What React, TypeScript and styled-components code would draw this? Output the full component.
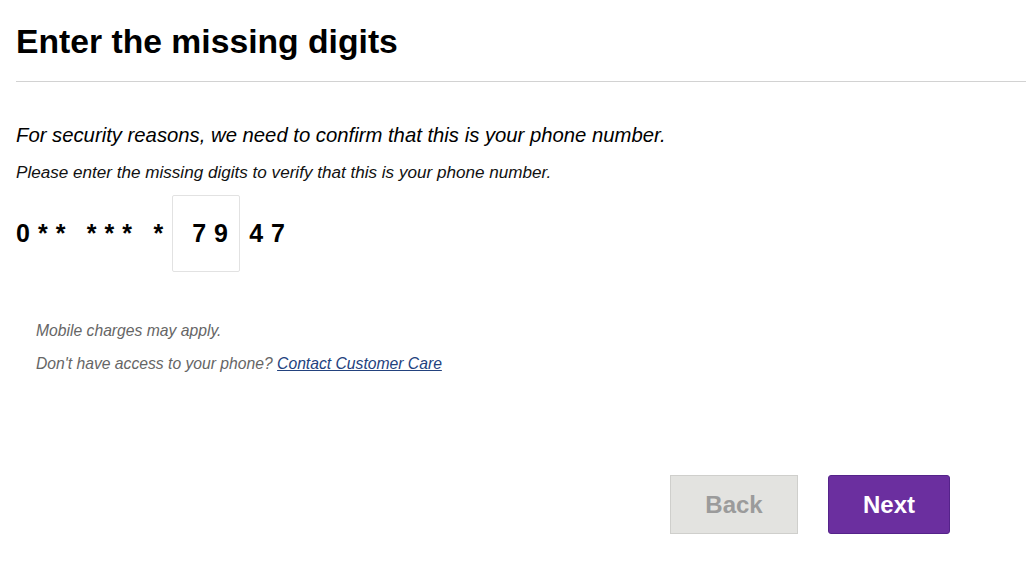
import React from "react";
import styled, { createGlobalStyle } from "styled-components";

const GlobalStyle = createGlobalStyle`
  html, body {
    margin: 0;
    padding: 0;
    background: #ffffff;
  }
  body {
    font-family: "Liberation Sans", Arial, sans-serif;
    color: #000;
  }
  * { box-sizing: border-box; }
`;

const Page = styled.main`
  width: 1026px;
  padding: 22px 0 0 16px;
`;

const Title = styled.h1`
  margin: 0;
  font-size: 33.7px;
  font-weight: 700;
  line-height: 38px;
  color: #000;
`;

const Divider = styled.hr`
  margin: 21px 0 0 0;
  border: 0;
  height: 1px;
  background: #d2d2d2;
`;

const Lead = styled.p`
  margin: 42px 0 0 0;
  font-size: 20.3px;
  font-style: italic;
  line-height: 22px;
  color: #000;
`;

const Instruction = styled.p`
  margin: 17px 0 0 0;
  font-size: 17.1px;
  font-style: italic;
  line-height: 19px;
  color: #111;
`;

const DigitsRow = styled.div`
  display: flex;
  align-items: center;
  margin-top: 13px;
`;

const Digits = styled.span`
  font-size: 25px;
  font-weight: 700;
  letter-spacing: 8px;
  word-spacing: -1.5px;
  white-space: pre;
  color: #000;
`;

const DigitBox = styled.input`
  width: 68px;
  height: 77px;
  margin: 0 9px 0 1px;
  padding: 0 0 0 19px;
  border: 1px solid #e2e2e2;
  border-radius: 2px;
  background: #fff;
  font-family: "Liberation Sans", Arial, sans-serif;
  font-size: 25px;
  font-weight: 700;
  letter-spacing: 8px;
  color: #000;
  outline: none;
`;

const Notes = styled.div`
  margin-top: 50px;
  padding-left: 20px;
  display: flex;
  flex-direction: column;
  gap: 15px;
`;

const Note = styled.p`
  margin: 0;
  font-size: 15.7px;
  font-style: italic;
  line-height: 18px;
  color: #666;
`;

const CareLink = styled.a`
  color: #23427e;
  text-decoration: underline;
  cursor: pointer;
`;

const ButtonRow = styled.div`
  display: flex;
  justify-content: flex-end;
  gap: 30px;
  margin-top: 102px;
  padding-right: 76px;
`;

const Button = styled.button<{ $primary?: boolean; $w: number }>`
  width: ${(p) => p.$w}px;
  height: 59px;
  border-radius: ${(p) => (p.$primary ? "3px" : "0")};
  border: 1px solid ${(p) => (p.$primary ? "#55238a" : "#cfcfcc")};
  background: ${(p) => (p.$primary ? "#6b2f9f" : "#e3e3e0")};
  color: ${(p) => (p.$primary ? "#ffffff" : "#9b9b9b")};
  font-family: "Liberation Sans", Arial, sans-serif;
  font-size: 24px;
  font-weight: 700;
  padding: 0;
  cursor: pointer;
`;

export default function App() {
  return (
    <>
      <GlobalStyle />
      <Page>
        <Title>Enter the missing digits</Title>
        <Divider />
        <Lead>For security reasons, we need to confirm that this is your phone number.</Lead>
        <Instruction>Please enter the missing digits to verify that this is your phone number.</Instruction>
        <DigitsRow>
          <Digits>{"0** *** *"}</Digits>
          <DigitBox type="text" defaultValue="79" maxLength={2} aria-label="Missing digits" />
          <Digits>47</Digits>
        </DigitsRow>
        <Notes>
          <Note>Mobile charges may apply.</Note>
          <Note>
            Don't have access to your phone? <CareLink>Contact Customer Care</CareLink>
          </Note>
        </Notes>
        <ButtonRow>
          <Button $w={128}>Back</Button>
          <Button $primary $w={122}>Next</Button>
        </ButtonRow>
      </Page>
    </>
  );
}
